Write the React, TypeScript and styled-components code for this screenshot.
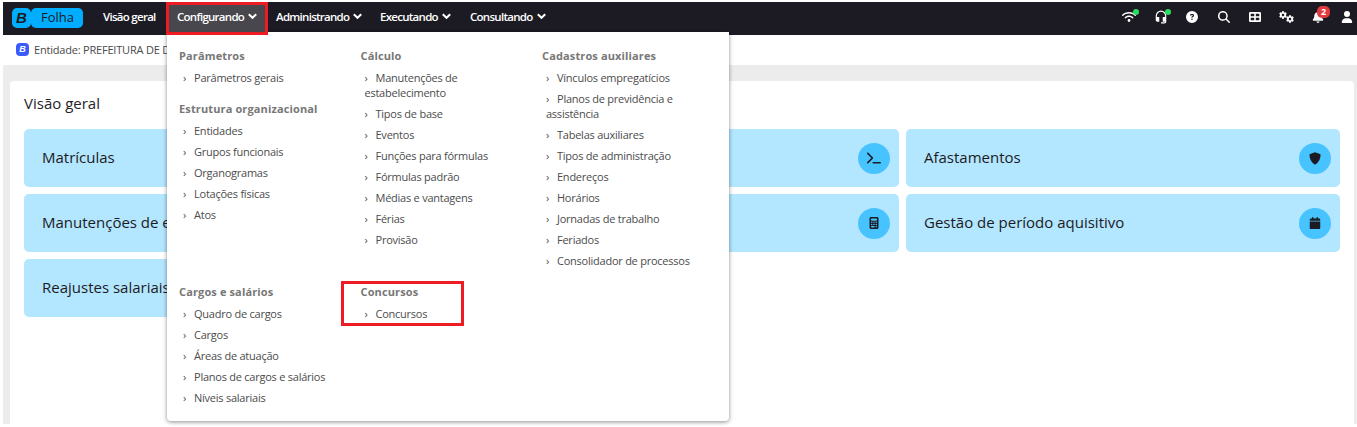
import React from 'react';
import styled, { createGlobalStyle } from 'styled-components';
import { FaCog } from 'react-icons/fa';
import { MdHeadsetMic } from 'react-icons/md';
import { FaWifi, FaCircleQuestion, FaMagnifyingGlass, FaBell, FaUser, FaTerminal, FaCalculator, FaCalendar } from 'react-icons/fa6';

const Global = createGlobalStyle`
  * { box-sizing: border-box; }
  body { margin: 0; background: #fff; font-family: 'Open Sans', 'Noto Sans', sans-serif; overflow: hidden; }
`;

const Page = styled.div`
  height: 427px;
  padding: 2px 0 3px 3px;
`;

const Shell = styled.div`
  height: 422px;
  display: flex;
  flex-direction: column;
  background: #ececec;
`;

const Header = styled.header`
  height: 33px;
  flex: none;
  display: flex;
  justify-content: space-between;
  background: #1c1b23;
`;

const Nav = styled.nav`
  display: flex;
  align-items: flex-start;
`;

const Brand = styled.div`
  display: flex;
  width: 71px;
  height: 20px;
  margin: 6px 12px 0 9px;
`;

const BrandMark = styled.span`
  width: 19px;
  border-radius: 5px;
  background: #00adff;
  color: #1c1b23;
  font: italic 900 15px/19px 'Liberation Sans', sans-serif;
  text-align: center;
`;

const BrandName = styled.span`
  flex: 1;
  border-radius: 5px;
  background: #00adff;
  color: #1c1b23;
  font-size: 13px;
  font-weight: 500;
  line-height: 19px;
  text-align: center;
  text-indent: 1px;
`;

const NavItem = styled.div<{ $width: number; $active?: boolean }>`
  width: ${p => p.$width}px;
  height: 33px;
  display: flex;
  align-items: center;
  gap: 4px;
  padding: 0 0 4px 8px;
  border: ${p => (p.$active ? '3px solid #ed1c24' : '0')};
  background: ${p => (p.$active ? '#47474d' : 'transparent')};
  color: #fff;
  font-size: 11.5px;
  font-weight: 600;
  letter-spacing: -0.72px;
  white-space: nowrap;
  ${p => p.$active && 'position: relative; z-index: 3;'}

  &:first-of-type { letter-spacing: -0.55px; }
`;

const Tools = styled.div`
  display: flex;
  height: 30px;
  align-items: center;
`;

const Tool = styled.span`
  position: relative;
  width: 31.5px;
  display: flex;
  justify-content: center;
  color: #fff;

  &:last-child {
    width: 23px;
    justify-content: flex-end;
    padding-right: 4px;
  }
`;

const Dot = styled.i`
  position: absolute;
  top: -1px;
  right: 6px;
  width: 6px;
  height: 6px;
  border-radius: 50%;
  background: #2ddb62;
`;

const Badge = styled.b`
  position: absolute;
  top: -5px;
  right: 4px;
  width: 13px;
  height: 12px;
  border-radius: 5px;
  background: #e0393e;
  font-size: 9px;
  line-height: 12px;
  text-align: center;
`;

const EntityBar = styled.div`
  height: 30px;
  flex: none;
  display: flex;
  align-items: center;
  gap: 5px;
  padding: 0 0 2px 13px;
  background: #fff;
  color: #4a4a4a;
  font-size: 11px;
  letter-spacing: -0.2px;
  white-space: nowrap;
`;

const EntityMark = styled.span`
  width: 13px;
  height: 13px;
  border-radius: 4px;
  background: #3b5bfd;
  color: #fff;
  font: italic bold 9px/13px 'Liberation Sans', sans-serif;
  text-align: center;
`;

const Panel = styled.main`
  flex: 1;
  margin: 16px 3px 0 7px;
  padding: 12px 14px 0;
  border-radius: 4px 4px 0 0;
  background: #fff;
`;

const Title = styled.h1`
  height: 20px;
  margin: 0 0 16px;
  color: #24242b;
  font-size: 15px;
  font-weight: 400;
  line-height: 20px;
`;

const Tiles = styled.div`
  display: grid;
  grid-template-columns: repeat(3, 1fr);
  grid-auto-rows: 58px;
  gap: 7px;
`;

const Tile = styled.div`
  display: flex;
  align-items: center;
  justify-content: space-between;
  padding: 0 9px 2px 18px;
  border-radius: 5px;
  background: #b3e6ff;
  color: #1c1b23;
  font-size: 15px;
  white-space: nowrap;
`;

const TileIcon = styled.span`
  width: 32px;
  height: 31px;
  margin-top: 2px;
  display: flex;
  align-items: center;
  justify-content: center;
  border-radius: 50%;
  background: #47c4ff;
`;

const Menu = styled.div`
  position: absolute;
  z-index: 2;
  left: 167px;
  top: 32px;
  width: 562px;
  height: 389px;
  padding: 15.5px 0 0 12px;
  display: grid;
  grid-template-columns: 181.5px 181.5px 180px;
  grid-template-rows: 236px 1fr;
  border-radius: 0 0 4px 4px;
  background: #fff;
  box-shadow: 0 1px 4px rgba(0, 0, 0, 0.45);
`;

const GroupTitle = styled.h2`
  margin: 0 0 7px;
  color: #777;
  font-size: 11px;
  font-weight: 700;
  line-height: 15px;
  letter-spacing: 0.13px;
`;

const GroupBox = styled.section<{ $marked?: boolean }>`
  padding-bottom: 10px;
  ${p => p.$marked && `
    width: 123px;
    height: 45px;
    margin: -2.5px 0 0 -19.5px;
    padding: 0 0 0 16.5px;
    border: 3px solid #ed1c24;

    h2 { margin-top: -0.5px; }
  `}
`;

const MenuLink = styled.div`
  width: 150px;
  margin: 0 0 6px 4px;
  color: #4c4c4c;
  font-size: 11px;
  line-height: 15px;
  letter-spacing: -0.24px;
`;

const Arrow = styled.span`
  display: inline-block;
  width: 11px;
`;

const Chevron = () => (
  <svg width="9" height="7" viewBox="0 0 9 7" fill="none" stroke="#fff" strokeWidth="2">
    <path d="M0.8 1.2 4.5 4.8 8.2 1.2" />
  </svg>
);

const GridIcon = () => (
  <svg width="12" height="10" viewBox="0 0 12 10">
    <path fill="#fff" fillRule="evenodd" d="M1.3 0h9.4Q12 0 12 1.3v7.4Q12 10 10.7 10H1.3Q0 10 0 8.700V1.300Q0 0 1.300 0ZM1.700 1.700v2.500h3.500V1.700ZM6.800 1.700v2.500h3.500V1.700ZM1.700 5.800v2.500h3.500V5.800ZM6.800 5.800v2.500h3.500V5.800Z" />
  </svg>
);

const ShieldIcon = () => (
  <svg width="12" height="13" viewBox="0 0 12 13">
    <path fill="#1c1b23" d="M6 0.300 11.500 2.200Q12 8.800 6 12.700 0 8.800 0.500 2.200Z" />
  </svg>
);

const Gears = styled.span`
  display: flex;

  svg:first-child { margin: 0 -1px 4px 0; }
  svg:last-child { margin-top: 4px; }
`;

const Group = ({ title, items, marked }: { title: string; items: string[]; marked?: boolean }) => (
  <GroupBox $marked={marked}>
    <GroupTitle>{title}</GroupTitle>
    {items.map(item => (
      <MenuLink key={item}><Arrow>›</Arrow>{item}</MenuLink>
    ))}
  </GroupBox>
);

export default function App() {
  return (
    <Page>
      <Global />
      <Shell>
        <Header>
          <Nav>
            <Brand><BrandMark>B</BrandMark><BrandName>Folha</BrandName></Brand>
            <NavItem $width={71}>Visão geral</NavItem>
            <NavItem $width={102} $active>Configurando<Chevron /></NavItem>
            <NavItem $width={104}>Administrando<Chevron /></NavItem>
            <NavItem $width={90}>Executando<Chevron /></NavItem>
            <NavItem $width={90}>Consultando<Chevron /></NavItem>
          </Nav>
          <Tools>
            <Tool><FaWifi size={14} /><Dot /></Tool>
            <Tool><MdHeadsetMic size={14} /><Dot /></Tool>
            <Tool><FaCircleQuestion size={12} /></Tool>
            <Tool><FaMagnifyingGlass size={12} /></Tool>
            <Tool><GridIcon /></Tool>
            <Tool><Gears><FaCog size={8} /><FaCog size={8} /></Gears></Tool>
            <Tool><FaBell size={12} /><Badge>2</Badge></Tool>
            <Tool><FaUser size={12} /></Tool>
          </Tools>
        </Header>
        <EntityBar><EntityMark>B</EntityMark>Entidade: PREFEITURA DE D</EntityBar>
        <Panel>
          <Title>Visão geral</Title>
          <Tiles>
            <Tile>Matrículas</Tile>
            <Tile><span /><TileIcon><FaTerminal size={14} /></TileIcon></Tile>
            <Tile>Afastamentos<TileIcon><ShieldIcon /></TileIcon></Tile>
            <Tile>Manutenções de e</Tile>
            <Tile><span /><TileIcon><FaCalculator size={12} /></TileIcon></Tile>
            <Tile>Gestão de período aquisitivo<TileIcon><FaCalendar size={12} /></TileIcon></Tile>
            <Tile>Reajustes salariais</Tile>
          </Tiles>
        </Panel>
      </Shell>
      <Menu>
        <div>
          <Group title="Parâmetros" items={['Parâmetros gerais']} />
          <Group title="Estrutura organizacional" items={['Entidades', 'Grupos funcionais', 'Organogramas', 'Lotações físicas', 'Atos']} />
        </div>
        <Group title="Cálculo" items={['Manutenções de estabelecimento', 'Tipos de base', 'Eventos', 'Funções para fórmulas', 'Fórmulas padrão', 'Médias e vantagens', 'Férias', 'Provisão']} />
        <Group title="Cadastros auxiliares" items={['Vínculos empregatícios', 'Planos de previdência e assistência', 'Tabelas auxiliares', 'Tipos de administração', 'Endereços', 'Horários', 'Jornadas de trabalho', 'Feriados', 'Consolidador de processos']} />
        <Group title="Cargos e salários" items={['Quadro de cargos', 'Cargos', 'Áreas de atuação', 'Planos de cargos e salários', 'Níveis salariais']} />
        <Group title="Concursos" items={['Concursos']} marked />
      </Menu>
    </Page>
  );
}
